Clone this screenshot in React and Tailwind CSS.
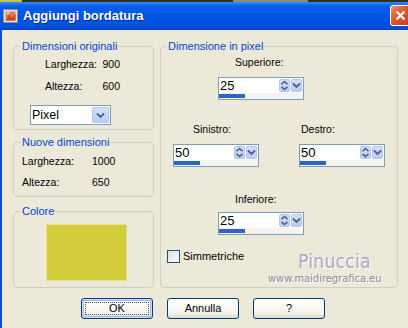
import React from 'react'

const UpDown = () => (
  <div className="w-[11px] h-[13px] rounded-[2px] bg-[linear-gradient(180deg,#D4E0FD,#B9CBF7)] border border-[#B2C5F2] flex items-center justify-center">
    <svg width="9" height="11" viewBox="0 0 9 11">
      <path d="M1.5 4.2 L4.5 1.5 L7.5 4.2" fill="none" stroke="#4D6185" strokeWidth="1.6" />
      <path d="M1.5 6.8 L4.5 9.5 L7.5 6.8" fill="none" stroke="#4D6185" strokeWidth="1.6" />
    </svg>
  </div>
)

const Chevron = ({ w = 11, h = 13 }) => (
  <div
    className="rounded-[2px] bg-[linear-gradient(180deg,#D4E0FD,#B9CBF7)] border border-[#B2C5F2] flex items-center justify-center"
    style={{ width: w, height: h }}
  >
    <svg width="9" height="7" viewBox="0 0 9 7">
      <path d="M1 1.5 L4.5 5 L8 1.5" fill="none" stroke="#4D6185" strokeWidth="1.8" />
    </svg>
  </div>
)

const Spinner = ({ value }) => (
  <div className="w-[86px] h-[23px] border border-[#7F9DB9] bg-white flex flex-col">
    <div className="h-[15px] flex items-center">
      <span className="flex-1 pl-[1px] text-[13px] leading-[15px] text-black">{value}</span>
      <div className="flex gap-[1px] mr-[1px]">
        <UpDown />
        <Chevron />
      </div>
    </div>
    <div className="h-[6px] bg-[#F4F3EE] flex items-center">
      <div className="h-[4px] w-[26px] bg-[#2F63C9]" />
    </div>
  </div>
)

const XpButton = ({ children, focused }) => (
  <button
    type="button"
    className={
      focused
        ? 'w-[72px] h-[21px] rounded-[3px] border border-[#003C74] bg-[linear-gradient(180deg,#FFFFFF,#F3F2EC_75%,#DCD8CC)] shadow-[inset_0_0_0_1px_#CEDDF8,inset_0_0_0_2px_#9DBAEB] flex items-center justify-center p-[3px]'
        : 'w-[72px] h-[21px] rounded-[3px] border border-[#003C74] bg-[linear-gradient(180deg,#FFFFFF,#F3F2EC_75%,#DCD8CC)] flex items-center justify-center'
    }
  >
    <span
      className={
        focused
          ? 'w-full h-full border border-dotted border-[#555] flex items-center justify-center text-[11px] leading-[13px] text-black'
          : 'text-[11px] leading-[13px] text-black'
      }
    >
      {children}
    </span>
  </button>
)

export default function App() {
  return (
    <div className="w-[408px] h-[328px] overflow-hidden flex flex-col font-['Liberation_Sans',Arial,sans-serif] text-[10.5px] leading-[13px] text-black">
      {/* strip of desktop above the rounded title bar */}
      <div className="h-[2px] flex">
        <div className="w-[22px] bg-[#C9C04A]" />
        <div className="flex-1 bg-[#2E2E28]" />
        <div className="w-[75px] bg-[#8A8A86]" />
        <div className="w-[100px] bg-[#2E2E28]" />
      </div>

      {/* title bar */}
      <div className="h-[28px] flex items-center bg-[linear-gradient(180deg,#3B8BF7_0%,#0A5EEA_14%,#0055E5_50%,#0051DD_85%,#0044C6_100%)]">
        <svg className="ml-[3px]" width="15" height="14" viewBox="0 0 15 14">
          <rect x="0.5" y="0.5" width="14" height="13" fill="#E9E6DE" stroke="#8C8C8C" />
          <rect x="2.5" y="2.5" width="10" height="9" fill="#E07A4A" />
          <path d="M2.5 11.5 L6 6 L9 9 L12.5 5 L12.5 11.5 Z" fill="#C8472A" />
          <rect x="3.5" y="3" width="3" height="2" fill="#F3C7A5" />
        </svg>
        <span className="ml-[5px] text-[13px] font-bold text-white leading-[16px] [text-shadow:1px_1px_0_#0A2A8C]">
          Aggiungi bordatura
        </span>
        <div className="ml-auto -mr-[3px] w-[21px] h-[21px] mb-[1px] rounded-[3px] border border-white bg-[linear-gradient(135deg,#F0906C,#E0542E_45%,#C8401C)] flex items-center justify-center">
          <svg width="11" height="11" viewBox="0 0 11 11">
            <path d="M1.5 1.5 L9.5 9.5 M9.5 1.5 L1.5 9.5" stroke="white" strokeWidth="2.2" />
          </svg>
        </div>
      </div>

      {/* client area */}
      <div className="flex-1 relative bg-[#ECE9D8] border-l-2 border-[#0B4FD9]">
        <div className="flex items-start pl-[11px] pt-[10px]">
          {/* left column */}
          <div className="w-[141px] flex flex-col">
            <fieldset className="h-[90px] border border-[#D0D0BF] rounded-[4px]">
              <legend className="ml-[7px] px-[1px] text-[#0046D5] text-[11px] leading-[13px]">Dimensioni originali</legend>
              <div className="mt-[5px] pl-[31px] flex">
                <span className="w-[52px]">Larghezza:</span>
                <span className="w-[23px] text-right">900</span>
              </div>
              <div className="mt-[9px] pl-[31px] flex">
                <span className="w-[52px]">Altezza:</span>
                <span className="w-[23px] text-right">600</span>
              </div>
              <div className="mt-[12px] ml-[16px] w-[81px] h-[20px] border border-[#7F9DB9] bg-white flex items-center">
                <span className="flex-1 pl-[1px] text-[12.5px] leading-[15px]">Pixel</span>
                <div className="mr-[1px]">
                  <Chevron w={17} h={16} />
                </div>
              </div>
            </fieldset>

            <fieldset className="mt-[6px] h-[61px] border border-[#D0D0BF] rounded-[4px]">
              <legend className="ml-[7px] px-[1px] text-[#0046D5] text-[11px] leading-[13px]">Nuove dimensioni</legend>
              <div className="mt-[6px] pl-[8px] flex">
                <span className="w-[70px]">Larghezza:</span>
                <span>1000</span>
              </div>
              <div className="mt-[8px] pl-[8px] flex">
                <span className="w-[70px]">Altezza:</span>
                <span>650</span>
              </div>
            </fieldset>

            <fieldset className="mt-[8px] h-[83px] border border-[#D0D0BF] rounded-[4px]">
              <legend className="ml-[7px] px-[1px] text-[#0046D5] text-[11px] leading-[13px]">Colore</legend>
              <div className="mt-[6px] ml-[32px] w-[81px] h-[57px] bg-[#D3CC3B] border border-[#E4DF92]" />
            </fieldset>
          </div>

          {/* right column */}
          <fieldset className="ml-[6px] w-[238px] h-[248px] border border-[#D0D0BF] rounded-[4px]">
            <legend className="ml-[6px] px-[1px] text-[#0046D5] text-[11px] leading-[13px]">Dimensione in pixel</legend>
            <div className="mt-[3px] ml-[74px]">Superiore:</div>
            <div className="mt-[8px] ml-[57px]">
              <Spinner value="25" />
            </div>

            <div className="mt-[23px] flex">
              <div className="w-[138px] pl-[32px]">Sinistro:</div>
              <div className="pl-[2px]">Destro:</div>
            </div>
            <div className="mt-[8px] flex">
              <div className="w-[138px] pl-[12px]">
                <Spinner value="50" />
              </div>
              <Spinner value="50" />
            </div>

            <div className="mt-[26px] ml-[74px]">Inferiore:</div>
            <div className="mt-[6px] ml-[57px]">
              <Spinner value="25" />
            </div>

            <div className="mt-[15px] ml-[6px] flex items-center gap-[3px]">
              <div className="w-[13px] h-[13px] border border-[#1C5180] bg-[linear-gradient(135deg,#DCDCD7,#FFFFFF)]" />
              <span className="text-[11px]">Simmetriche</span>
            </div>
          </fieldset>
        </div>

        {/* buttons */}
        <div className="mt-[10px] pl-[79px] flex gap-[14px]">
          <XpButton focused>OK</XpButton>
          <XpButton>Annulla</XpButton>
          <XpButton>?</XpButton>
        </div>

        {/* watermark signature over the dialog */}
        <div className="absolute left-[296px] top-[220px] text-[19px] leading-[22px] tracking-[0.3px] text-[#A9A7C8] font-['DejaVu_Sans_Condensed','DejaVu_Sans',sans-serif] [text-shadow:1px_1px_0_#FFFFFF]">
          Pinuccia
        </div>
        <div className="absolute left-[266px] top-[243px] text-[11px] leading-[12px] text-[#8C8A9A] font-['DejaVu_Sans_Condensed','DejaVu_Sans',sans-serif] [text-shadow:1px_1px_0_#FFFFFF]">
          www.maidiregrafica.eu
        </div>
      </div>
    </div>
  )
}
